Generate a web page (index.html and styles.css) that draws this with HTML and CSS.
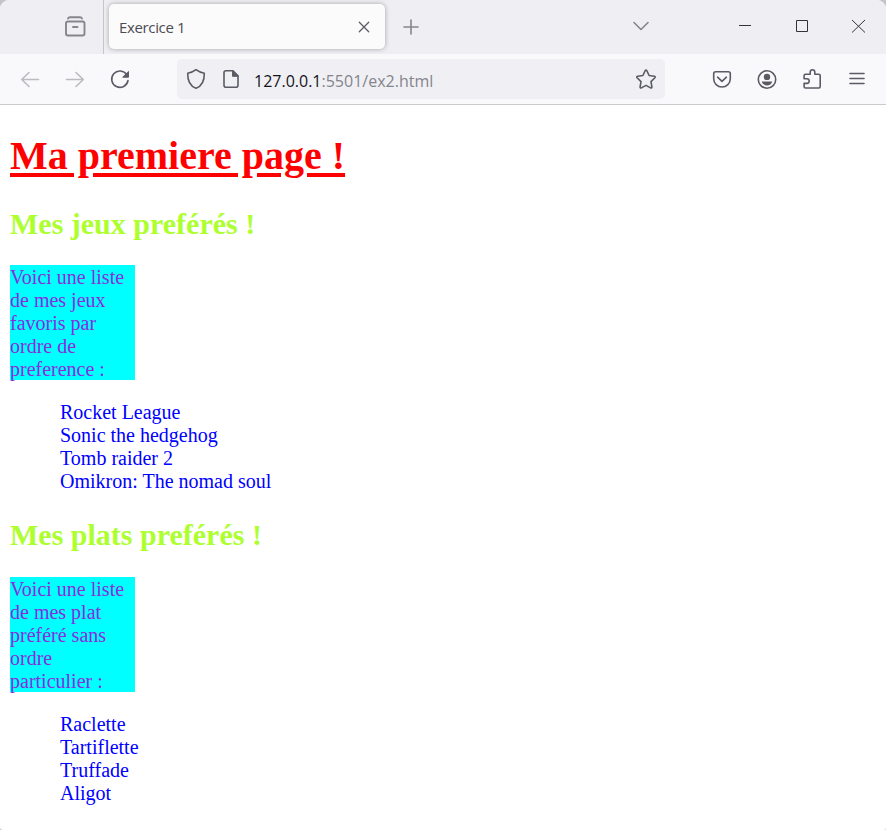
FILE: index.html
```html
<!DOCTYPE html>
<html lang="fr">
<head>
<meta charset="utf-8">
<title>Exercice 1</title>
<link rel="stylesheet" href="styles.css">
</head>
<body>
<div class="window">
  <header class="tabstrip">
    <div class="view-box">
      <svg class="icon muted archive" viewBox="0 0 24 24"><path d="M5 3.500Q5.500 2.200 7 2.200H17Q18.500 2.200 19 3.500"/><rect x="3" y="6.500" width="18.500" height="14" rx="2"/><path d="M10 12h4.500"/></svg>
    </div>
    <div class="tab">
      <span class="tab-title">Exercice 1</span>
      <svg class="icon thin" viewBox="0 0 24 24"><path d="M7.300 7.300l9.400 9.400M16.700 7.300l-9.400 9.400"/></svg>
    </div>
    <svg class="icon muted new-tab" viewBox="0 0 24 24"><path d="M5 12h14M12 5v14"/></svg>
    <svg class="icon muted all-tabs" viewBox="0 0 24 24"><path d="M5 7.500l7 7 7-7"/></svg>
    <svg class="icon caption minimize" viewBox="0 0 24 24"><path d="M6 10.500h12"/></svg>
    <svg class="icon caption maximize" viewBox="0 0 24 24"><path d="M6.500 5.500h11v11h-11z"/></svg>
    <svg class="icon caption close" viewBox="0 0 24 24"><path d="M6 5l13 12.500M19 5L6 17.500"/></svg>
  </header>
  <nav class="toolbar">
    <svg class="icon disabled back" viewBox="0 0 24 24"><path d="M20.500 12.500H3.700M11 5.500L3.700 12.500 11 19.500"/></svg>
    <svg class="icon disabled forward" viewBox="0 0 24 24"><path d="M3.500 12.500h16.800M13 5.500l7.300 7L13 19.500"/></svg>
    <svg class="icon reload" viewBox="0 0 24 24"><path d="M18.800 7.700A8.200 8.200 0 1 0 20 13.500"/><path class="fill" d="M20.500 4.800v5.400h-5.400z"/></svg>
    <div class="urlbar">
      <svg class="icon shield" viewBox="0 0 24 24"><path d="M12 2.700C9.500 4.700 7 5.700 3.700 6.200C3.500 14 5.500 18.800 12 21.300C18.500 18.800 20.500 14 20.300 6.200C17 5.700 14.500 4.700 12 2.700z"/></svg>
      <svg class="icon page" viewBox="0 0 24 24"><path d="M7 3.800h7l5 5v9.400q0 2-2 2H7q-2 0-2-2V5.800q0-2 2-2z"/><path class="fill" d="M13.500 3.800v5.500H19z"/></svg>
      <span class="url"><span class="host">127.0.0.1</span>:5501/ex2.html</span>
      <svg class="icon star" viewBox="0 0 24 24"><path d="M11.200 3.700q.8-1.300 1.600 0l2.300 4.800 5.300.8q1.400.4.500 1.500L17 14.600l.9 5.400q0 1.400-1.300.9L12 18.400l-4.600 2.500q-1.300.5-1.300-.9L7 14.600l-3.900-3.800q-.9-1.100.5-1.500l5.300-.8z"/></svg>
    </div>
    <svg class="icon pocket" viewBox="0 0 24 24"><path d="M5.700 4.700h12.600q2 0 2 2v5a8.300 8.300 0 0 1-16.600 0v-5q0-2 2-2z"/><path d="M7.600 10.200l4.400 4.200 4.400-4.200"/></svg>
    <svg class="icon account" viewBox="0 0 24 24"><circle cx="12" cy="12.500" r="8.700"/><circle class="solid" cx="12" cy="9.900" r="3.200"/><path class="solid" d="M6.700 14.500h10.600q-1.300 3.900-5.300 3.900t-5.300-3.900z"/></svg>
    <svg class="icon extensions" viewBox="0 0 24 24"><path d="M5.500 7.200h4.700V5a2.300 2.300 0 0 1 4.600 0v2.200h4q1.400 0 1.400 1.400v11q0 1.400-1.400 1.400H5.500q-1.400 0-1.400-1.400v-3.200h2.800a2.300 2.300 0 0 0 0-4.600H4.100V8.600q0-1.400 1.400-1.400z"/></svg>
    <svg class="icon menu" viewBox="0 0 24 24"><path d="M5 6.500h14M5 11.500h14M5 16.500h14"/></svg>
  </nav>
  <main class="page-content">
    <h1>Ma premiere page !</h1>
    <section class="games">
      <h2>Mes jeux preférés !</h2>
      <p>Voici une liste de mes jeux favoris par ordre de preference :</p>
      <ul>
        <li>Rocket League</li>
        <li>Sonic the hedgehog</li>
        <li>Tomb raider 2</li>
        <li>Omikron: The nomad soul</li>
      </ul>
    </section>
    <section class="dishes">
      <h2>Mes plats preférés !</h2>
      <p>Voici une liste de mes plat préféré sans ordre particulier :</p>
      <ul>
        <li>Raclette</li>
        <li>Tartiflette</li>
        <li>Truffade</li>
        <li>Aligot</li>
      </ul>
    </section>
  </main>
</div>
</body>
</html>
```
FILE: styles.css
```css
* { box-sizing: border-box; }
body { margin: 0; background: #c4c4c6; }
.window {
  width: 886px;
  height: 830px;
  overflow: hidden;
  background: #fff;
  border-radius: 9px 9px 2px 3px;
}
.icon {
  width: 24px;
  height: 24px;
  flex: none;
  fill: none;
  stroke: #5b5b66;
  stroke-width: 1.6;
  stroke-linecap: round;
  stroke-linejoin: round;
}
.icon .fill { fill: #5b5b66; stroke-width: 1; }
.icon .solid { fill: #5b5b66; stroke: none; }
.muted { stroke: #85858e; }
.archive { stroke-width: 1.9; }
.thin { stroke-width: 1.3; }
.disabled { stroke: #bcbcc0; }
.caption { stroke: #333338; stroke-width: 1; stroke-linecap: butt; stroke-linejoin: miter; }

.tabstrip {
  display: flex;
  align-items: center;
  height: 54px;
  background: #efeef3;
}
.view-box {
  display: flex;
  align-items: center;
  width: 104px;
  height: 54px;
  padding-left: 63px;
  border-right: 1px solid #c5c5ca;
}
.tab {
  display: flex;
  align-items: center;
  justify-content: space-between;
  width: 276px;
  height: 45px;
  margin: 0 0 1px 5px;
  padding: 0 9px 0 10px;
  background: #fbfbfc;
  border-radius: 5px;
  box-shadow: 0 0 5px rgba(0, 0, 0, .32);
}
.tab-title {
  margin-top: 1px;
  font: 15px/20px "Open Sans", "Noto Sans", sans-serif;
  letter-spacing: -.35px;
  color: #4b4b52;
}
.new-tab { margin-left: 14px; }
.all-tabs { margin-left: 206px; }
.minimize { margin-left: 80px; }
.maximize { margin-left: 33px; }
.close { margin-left: 32px; }

.toolbar {
  display: flex;
  align-items: center;
  height: 51px;
  padding-bottom: 1px;
  background: #f9f9fb;
  border-bottom: 1px solid #cacacc;
}
.back { margin-left: 18px; }
.forward { margin-left: 21px; }
.reload { margin-left: 21px; }
.urlbar {
  display: flex;
  align-items: center;
  width: 488px;
  height: 40px;
  margin-left: 45px;
  background: #f0f0f4;
  border-radius: 5px;
}
.shield { margin-left: 7px; }
.page { margin-left: 11px; }
.url {
  margin: 5px 0 0 11px;
  font: 16px/22px "Open Sans", "Noto Sans", sans-serif;
  color: #84848c;
}
.host { color: #15141a; }
.star { margin: 0 7px 0 auto; }
.pocket { margin-left: 45px; }
.account { margin-left: 21px; }
.extensions { margin-left: 21px; }
.menu { margin-left: 21px; }

.page-content {
  display: flow-root;
  padding: 0 10px;
  font: 20px/23px "Liberation Serif", serif;
}
h1 {
  margin: 28px 0;
  font-size: 40px;
  line-height: 46px;
  color: red;
  text-decoration: underline 4px;
  text-underline-offset: 4px;
}
h2 {
  margin: 25px 0;
  font-size: 30px;
  line-height: 34px;
  color: greenyellow;
}
.games h2 { margin-bottom: 24px; }
p {
  width: 125px;
  height: 115px;
  margin: 0 0 21px;
  padding-top: 1px;
  background: aqua;
  color: blueviolet;
}
ul {
  margin: 0;
  padding-left: 50px;
  list-style: none;
  color: blue;
}
```
